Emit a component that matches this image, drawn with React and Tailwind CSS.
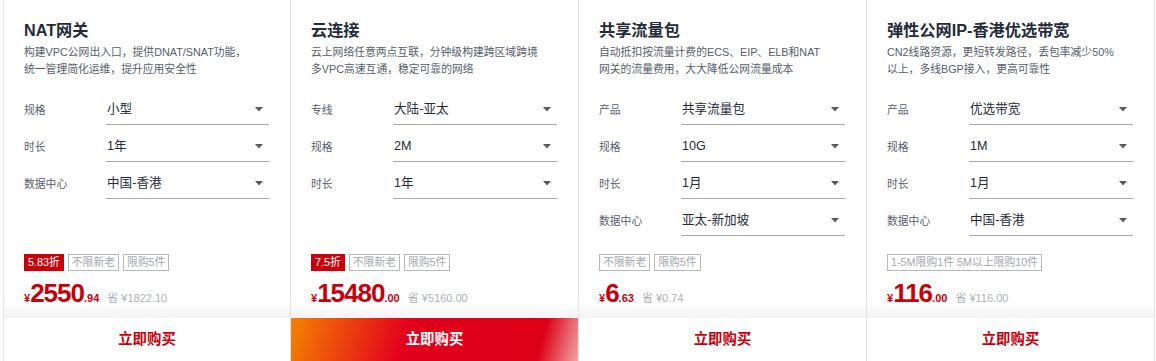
const products = [
  {
    title: "NAT网关",
    desc: ["构建VPC公网出入口，提供DNAT/SNAT功能，", "统一管理简化运维，提升应用安全性"],
    rows: [
      ["规格", "小型"],
      ["时长", "1年"],
      ["数据中心", "中国-香港"],
    ],
    discount: "5.83折",
    tags: ["不限新老", "限购5件"],
    price: "2550",
    cents: ".94",
    saved: "¥1822.10",
  },
  {
    title: "云连接",
    desc: ["云上网络任意两点互联，分钟级构建跨区域跨境", "多VPC高速互通，稳定可靠的网络"],
    rows: [
      ["专线", "大陆-亚太"],
      ["规格", "2M"],
      ["时长", "1年"],
    ],
    discount: "7.5折",
    tags: ["不限新老", "限购5件"],
    price: "15480",
    cents: ".00",
    saved: "¥5160.00",
    active: true,
  },
  {
    title: "共享流量包",
    desc: ["自动抵扣按流量计费的ECS、EIP、ELB和NAT", "网关的流量费用，大大降低公网流量成本"],
    rows: [
      ["产品", "共享流量包"],
      ["规格", "10G"],
      ["时长", "1月"],
      ["数据中心", "亚太-新加坡"],
    ],
    tags: ["不限新老", "限购5件"],
    price: "6",
    cents: ".63",
    saved: "¥0.74",
  },
  {
    title: "弹性公网IP-香港优选带宽",
    desc: ["CN2线路资源，更短转发路径，丢包率减少50%", "以上，多线BGP接入，更高可靠性"],
    rows: [
      ["产品", "优选带宽"],
      ["规格", "1M"],
      ["时长", "1月"],
      ["数据中心", "中国-香港"],
    ],
    tags: ["1-5M限购1件 5M以上限购10件"],
    price: "116",
    cents: ".00",
    saved: "¥116.00",
  },
];

function SelectRow({ label, value }) {
  return (
    <div className="flex items-center">
      <div className="w-[82px] text-[10.8px] text-[#575d6c]">{label}</div>
      <div className="flex h-[30px] flex-1 items-center justify-between border-b border-[#a9a9a9] pl-[1px] pr-[6px]">
        <span className="text-[12.6px] text-[#252b3a]">{value}</span>
        <svg width="8" height="5" viewBox="0 0 8 5">
          <polygon points="0,0 8,0 4,4.5" fill="#5a5a5a" />
        </svg>
      </div>
    </div>
  );
}

function Card({ item, first }) {
  return (
    <div
      className={`flex h-[361px] w-[288px] flex-col border-r border-[#e3e3e3] ${
        first ? "border-l" : ""
      }`}
    >
      <div className="px-[20px] pt-[19px]">
        <h3 className="text-[16.2px] font-bold leading-[22px] text-[#252b3a]">
          {item.title}
        </h3>
        <p className="mt-[3px] text-[10.8px] leading-[17px] text-[#575d6c]">
          {item.desc[0]}
          <br />
          {item.desc[1]}
        </p>
        <div className="mt-[17px] flex flex-col gap-[7px] pr-[1px]">
          {item.rows.map(([label, value]) => (
            <SelectRow key={label} label={label} value={value} />
          ))}
        </div>
      </div>

      <div className="mt-auto bg-[linear-gradient(180deg,#ffffff_74%,#f3f3f5_100%)] px-[20px] pb-[11px]">
        <div className="flex gap-[4px]">
          {item.discount && (
            <span className="h-[17px] border border-[#c7000b] bg-[#c7000b] px-[3px] text-[10.8px] leading-[15px] text-white">
              {item.discount}
            </span>
          )}
          {item.tags.map((t) => (
            <span
              key={t}
              className="h-[17px] border border-[#b8b8b8] px-[3px] text-[10.8px] leading-[15px] text-[#a4a7ae]"
            >
              {t}
            </span>
          ))}
        </div>
        <div className="mt-[8px] flex h-[28px] items-baseline text-[#c7000b]">
          <span className="text-[11px] font-bold">¥</span>
          <span className="text-[26px] font-bold leading-[28px] tracking-[-1px]">
            {item.price}
          </span>
          <span className="text-[11px] font-bold">{item.cents}</span>
          <span className="ml-[8px] text-[11px] text-[#adb0b8]">省 {item.saved}</span>
        </div>
      </div>

      <button
        className={`h-[43px] w-full text-[14.4px] font-bold ${
          item.active
            ? "bg-[linear-gradient(105deg,#f48200_0%,#e2001c_40%,#dc0016_86%,#f2a4a4_100%)] text-white"
            : "bg-white text-[#c7000b]"
        }`}
      >
        立即购买
      </button>
    </div>
  );
}

export default function App() {
  return (
    <div className="flex h-[361px] w-[1156px] bg-white pl-[3px] font-['Liberation_Sans','Noto_Sans_CJK_SC',sans-serif]">
      {products.map((item, i) => (
        <Card key={item.title} item={item} first={i === 0} />
      ))}
    </div>
  );
}
